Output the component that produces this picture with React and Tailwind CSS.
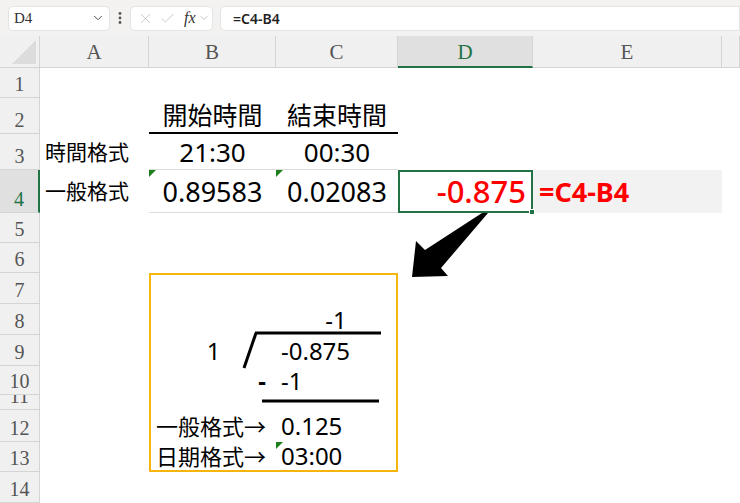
import { ChevronDown, X, Check } from "lucide-react";

const SANS = "font-['Noto_Sans','Noto_Sans_CJK_TC',sans-serif]";
const SERIF = "font-['Liberation_Serif','DejaVu_Serif',serif]";

const COLS = ["A", "B", "C", "D", "E", "F"];
const ROWS = [1, 2, 3, 4, 5, 6, 7, 8, 9, 10, 11, 12, 13, 14];

// contents of the sheet, keyed by address
const cells = {
  B2: { text: "開始時間", cls: "justify-center text-[25px] text-black border-b-2 border-b-black" },
  C2: { text: "結束時間", cls: "justify-center text-[25px] text-black border-b-2 border-b-black" },
  A3: { text: "時間格式", cls: "pl-[5px] text-[21px] text-black" },
  B3: { text: "21:30", cls: "justify-center text-[26px] text-black border-b border-b-[#dcdcdc]" },
  C3: { text: "00:30", cls: "justify-center text-[26px] text-black border-b border-b-[#dcdcdc]" },
  A4: { text: "一般格式", cls: "pl-[5px] text-[21px] text-black" },
  B4: { text: "0.89583", cls: "justify-center text-[27px] text-black border-b border-b-[#dcdcdc]", tri: true },
  C4: { text: "0.02083", cls: "justify-center text-[27px] text-black border-b border-b-[#dcdcdc]", tri: true },
  D4: { text: "-0.875", cls: "justify-end pr-[5px] text-[31px] font-medium text-[#ff0000] border-2 border-[#217346]", sel: true },
  E4: { text: "=C4-B4", cls: "pl-[6px] text-[27px] font-bold text-[#ff0000] bg-[#f2f2f2]" },
  C8: { text: "-1", cls: "justify-center text-[24px] text-black" },
  B9: { text: "1", cls: "justify-center text-[24px] text-black" },
  C9: { text: "-0.875", cls: "pl-[5px] text-[24px] text-black" },
  B10: { text: "-", cls: "justify-end pr-[10px] text-[24px] font-bold text-black" },
  C10: { text: "-1", cls: "pl-[5px] text-[24px] text-black" },
  B12: { text: "一般格式→", cls: "pl-[5px] text-[22px] text-black" },
  C12: { text: "0.125", cls: "pl-[5px] text-[24px] text-black" },
  B13: { text: "日期格式→", cls: "pl-[5px] text-[22px] text-black" },
  C13: { text: "03:00", cls: "pl-[5px] text-[24px] text-black", tri: true },
};

function Cell({ col, row }) {
  const c = cells[col + row] || {};
  const inBox = (col === "B" || col === "C") && row >= 7 && row <= 13;
  return (
    <div
      className={`relative flex items-center whitespace-nowrap leading-none ${c.cls || ""} ${
        inBox ? "border-solid border-[color:#f5b50c]" : ""
      } ${inBox && row === 7 ? "border-t-2" : ""} ${inBox && row === 13 ? "border-b-2" : ""} ${
        inBox && col === "B" ? "border-l-2" : ""
      } ${inBox && col === "C" ? "border-r-2" : ""}`}
    >
      {c.tri && (
        <span className="absolute top-0 left-0 w-0 h-0 border-t-[7px] border-r-[7px] border-t-[#1d7f1d] border-r-transparent" />
      )}
      {c.text}
      {c.sel && (
        <span className="absolute -right-[4px] -bottom-[4px] z-10 w-[6px] h-[6px] bg-[#217346] border border-white" />
      )}
    </div>
  );
}

function FormulaBar() {
  return (
    <div className="h-[36px] bg-[#f3f2f0] flex items-center pl-[8px]">
      <div className="w-[102px] h-[25px] bg-white rounded-[5px] border border-[#e4e4e4] flex items-center justify-between pl-[5px] pr-[4px]">
        <span className={`${SERIF} text-[15px] text-[#333]`}>D4</span>
        <ChevronDown size={14} strokeWidth={1.6} className="text-[#444]" />
      </div>
      <div className="w-[20px] flex justify-center">
        <svg width="4" height="14" viewBox="0 0 4 14">
          <circle cx="2" cy="2.5" r="1.4" fill="#555" />
          <circle cx="2" cy="7" r="1.4" fill="#555" />
          <circle cx="2" cy="11.5" r="1.4" fill="#555" />
        </svg>
      </div>
      <div className="w-[83px] h-[25px] bg-white rounded-[5px] border border-[#e4e4e4] flex items-center pl-[6px] gap-[5px]">
        <X size={17} strokeWidth={1} className="text-[#b5b5b5]" />
        <Check size={17} strokeWidth={1} className="text-[#b5b5b5]" />
        <span className={`${SERIF} italic text-[16px] text-[#333] ml-[3px]`}>fx</span>
        <ChevronDown size={12} strokeWidth={1.2} className="text-[#999] -ml-[3px]" />
      </div>
      <div className="ml-[7px] flex-1 h-[25px] bg-white rounded-l-[5px] border border-[#e4e4e4] flex items-center pl-[12px]">
        <span className={`${SANS} text-[14px] font-semibold text-[#222]`}>=C4-B4</span>
      </div>
    </div>
  );
}

export default function App() {
  return (
    <div className={`relative w-[740px] h-[503px] overflow-hidden bg-white ${SANS}`}>
      <FormulaBar />
      <div className="grid grid-cols-[40px_109px_127px_122px_135px_189px_18px] grid-rows-[32px_30px_36px_36px_43px_30px_30px_31px_31px_31px_29px_15px_32px_30px_31px]">
        {/* corner */}
        <div className="bg-[#f0f0f0] border-r border-b border-[#d4d4d4] flex items-end justify-end pr-[3px] pb-[3px]">
          <svg width="24" height="24" viewBox="0 0 24 24">
            <polygon points="24,0 24,24 0,24" fill="#dcdcdc" />
          </svg>
        </div>
        {COLS.map((c) =>
          c === "D" ? (
            <div key={c} className={`${SERIF} bg-[#e0e0e0] border-r border-r-[#d4d4d4] border-b-2 border-b-[#217346] flex items-end justify-center pb-[3px] text-[21px] leading-none text-[#217346]`}>
              {c}
            </div>
          ) : (
            <div key={c} className={`${SERIF} bg-[#f0f0f0] border-r border-b border-[#d4d4d4] flex items-end justify-center pb-[4px] text-[21px] leading-none text-[#555]`}>
              {c === "F" ? "" : c}
            </div>
          )
        )}
        {ROWS.map((r) => [
          r === 4 ? (
            <div key={"h" + r} className={`${SERIF} bg-[#e0e0e0] border-r-2 border-r-[#217346] border-b border-b-[#d4d4d4] flex items-end justify-center pb-[3px] text-[20px] leading-none text-[#217346]`}>
              {r}
            </div>
          ) : (
            <div key={"h" + r} className={`${SERIF} bg-[#f0f0f0] border-r border-b border-[#d4d4d4] flex items-end justify-center pb-[3px] text-[20px] leading-none text-[#555] overflow-hidden`}>
              {r}
            </div>
          ),
          ...COLS.map((c) => <Cell key={c + r} col={c} row={r} />),
        ])}
      </div>

      {/* drawn shapes lying over the sheet */}
      <svg className="absolute inset-0 pointer-events-none" width="740" height="503" viewBox="0 0 740 503">
        <polygon points="482,213 488,213 441,268 448,276 412,277 416,241 425,250" fill="#000" />
        <line x1="255" y1="333" x2="381" y2="333" stroke="#000" strokeWidth="3" />
        <line x1="256" y1="333" x2="244" y2="368" stroke="#000" strokeWidth="3" />
        <line x1="262" y1="401" x2="379" y2="401" stroke="#000" strokeWidth="3" />
      </svg>
    </div>
  );
}
